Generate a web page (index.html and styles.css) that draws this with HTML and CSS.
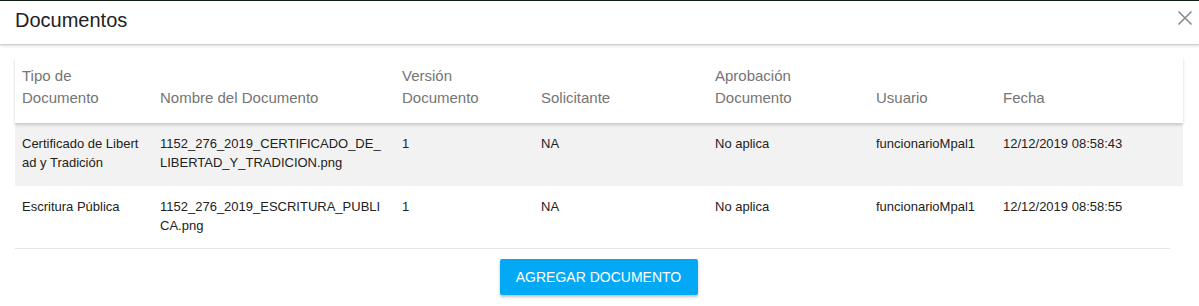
FILE: index.html
```html
<!DOCTYPE html>
<html lang="es">
<head>
<meta charset="utf-8">
<title>Documentos</title>
<link rel="stylesheet" href="styles.css">
</head>
<body>
<div class="modal">
  <header class="modal-header">
    <h1 class="modal-title">Documentos</h1>
    <button class="close" aria-label="Cerrar">
      <svg width="16" height="16" viewBox="0 0 16 16"><path d="M1.5 1.5 L14.5 14.5 M14.5 1.5 L1.5 14.5" stroke="#8a8a8a" stroke-width="1.6" fill="none"/></svg>
    </button>
  </header>
  <div class="modal-body">
    <div class="grid">
      <div class="row head">
        <div class="cell">Tipo de Documento</div>
        <div class="cell">Nombre del Documento</div>
        <div class="cell">Versión Documento</div>
        <div class="cell">Solicitante</div>
        <div class="cell">Aprobación Documento</div>
        <div class="cell">Usuario</div>
        <div class="cell">Fecha</div>
      </div>
      <div class="row body odd">
        <div class="cell">Certificado de Libertad y Tradición</div>
        <div class="cell">1152_276_2019_CERTIFICADO_DE_LIBERTAD_Y_TRADICION.png</div>
        <div class="cell">1</div>
        <div class="cell">NA</div>
        <div class="cell">No aplica</div>
        <div class="cell">funcionarioMpal1</div>
        <div class="cell">12/12/2019 08:58:43</div>
      </div>
      <div class="row body last">
        <div class="cell">Escritura Pública</div>
        <div class="cell">1152_276_2019_ESCRITURA_PUBLICA.png</div>
        <div class="cell">1</div>
        <div class="cell">NA</div>
        <div class="cell">No aplica</div>
        <div class="cell">funcionarioMpal1</div>
        <div class="cell">12/12/2019 08:58:55</div>
      </div>
    </div>
    <div class="actions">
      <button class="btn-primary">Agregar documento</button>
    </div>
  </div>
</div>
</body>
</html>
```
FILE: styles.css
```css
* { box-sizing: border-box; }
html, body { margin: 0; padding: 0; background: #fff; }
body {
  font-family: "Liberation Sans", Arial, sans-serif;
  border-top: 1px solid #0f1f12;
  width: 1199px;
  height: 306px;
  overflow: hidden;
}
.modal-header {
  height: 44px;
  display: flex;
  align-items: center;
  justify-content: space-between;
  padding: 0 6px 0 15px;
  border-bottom: 1px solid #cfcfcf;
  box-shadow: 0 1px 3px rgba(0,0,0,0.15);
  position: relative;
}
.modal-title {
  margin: 0;
  font-size: 20px;
  font-weight: normal;
  color: #222;
  padding-bottom: 4px;
}
.close {
  border: 0;
  background: none;
  padding: 0;
  width: 16px;
  height: 16px;
  margin-bottom: 9px;
  display: flex;
}
.modal-body {
  padding: 12px 16px 0 15px;
}
.grid { width: 1168px; }
.row {
  display: grid;
  grid-template-columns: 138px 242px 139px 174px 161px 127px 187px;
}
.cell {
  padding: 11px 7px 13px 7px;
  word-break: break-all;
}
.head {
  position: relative;
  box-shadow: 0 2px 3px rgba(0,0,0,0.18);
  background: #fff;
  z-index: 1;
}
.head .cell {
  font-size: 15px;
  line-height: 22px;
  color: #757575;
  padding: 8px 7px 14px 7px;
  display: flex;
  align-items: flex-end;
  word-break: normal;
}
.body .cell {
  font-size: 13px;
  line-height: 19px;
  color: #222;
  height: 63px;
}
.body .cell:nth-child(1) { padding-right: 12px; }
.body .cell:nth-child(2) { padding-right: 14px; }
.odd { background: #f2f2f2; }
.last .cell { border-bottom: 1px solid #e6e6e6; }
.last .cell:last-child { margin-right: 13px; }
.actions {
  display: flex;
  justify-content: center;
  padding-top: 10px;
  padding-right: 1px;
}
.btn-primary {
  background: #03a9f4;
  color: #fff;
  border: 0;
  border-radius: 2px;
  height: 36px;
  width: 198px;
  font-family: "Liberation Sans", Arial, sans-serif;
  font-size: 14px;
  text-transform: uppercase;
  box-shadow: 0 2px 3px rgba(0,0,0,0.25);
  padding: 0 8px;
}
```
